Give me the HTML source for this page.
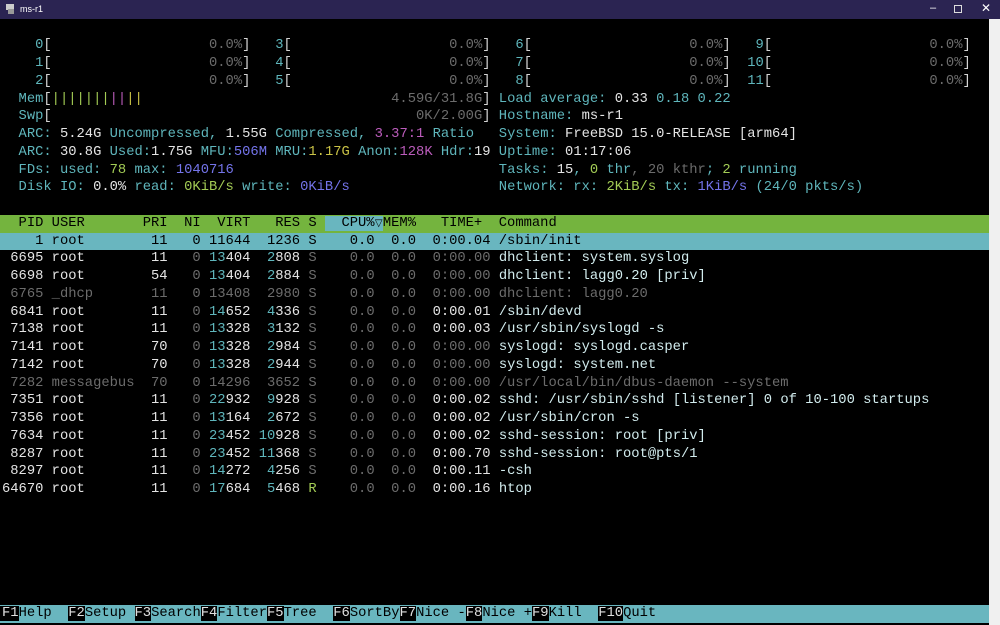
<!DOCTYPE html>
<html><head><meta charset="utf-8">
<style>
*{margin:0;padding:0;box-sizing:border-box}
html,body{width:1000px;height:625px;overflow:hidden;background:#000}
body{position:relative;font-family:"Liberation Mono","DejaVu Sans Mono",monospace;font-size:13.8px;color:#d4d4d4}
#title{position:absolute;left:0;top:0;width:1000px;height:19px;background:#2b2452;font-family:"Liberation Sans",sans-serif;color:#fff;font-size:9px}
#sb{position:absolute;left:989px;top:19px;width:11px;height:606px;background:#f0f0f0}
.t{position:absolute;left:calc(2px + var(--c)*8.28px);top:calc(19.5px + var(--r)*17.75px);white-space:pre;line-height:17.75px;height:17.75px}
.row{position:absolute;left:0;width:989px;top:calc(19.5px + var(--r)*17.75px);height:17.75px;line-height:17.75px;white-space:pre;padding-left:2px}
.c{color:#5fb6bc}.w{color:#e4e4e4}.g{color:#6c6c6c}.gr{color:#a3cc55}.b{color:#7474ea}.m{color:#bb5cbb}.y{color:#c9c246}.d{color:#d4d4d4}.cm{color:#d2ecee}
.hdr{background:#74b43e;color:#000}
.sel{background:#69b6bf;color:#000}
.tri{display:inline-block;width:8.28px;overflow:hidden;text-align:center;font-family:"DejaVu Sans",sans-serif;font-size:10px;vertical-align:top}
.k{color:#e0e0e0;background:#000}.l{background:#69b6bf;color:#000}
</style></head><body>
<div id="title">
<svg style="position:absolute;left:5px;top:3px" width="11" height="12" viewBox="0 0 11 12"><rect x="1" y="1" width="8" height="6" fill="#ccc"/><rect x="3" y="6" width="6" height="5" fill="#999"/></svg>
<span style="position:absolute;left:20px;top:4px">ms-r1</span>
<span style="position:absolute;left:930px;top:2px;font-size:11px">–</span>
<span style="position:absolute;left:954px;top:5px;width:8px;height:8px;border:1px solid #ddd"></span>
<span style="position:absolute;left:981px;top:1px;font-size:12px">✕</span>
</div>
<div id="sb"></div>

<!-- CPU meters -->
<span class="t c" style="--c:4;--r:1">0</span><span class="t d" style="--c:5;--r:1">[</span><span class="t g" style="--c:25;--r:1">0.0%</span><span class="t d" style="--c:29;--r:1">]</span>
<span class="t c" style="--c:33;--r:1">3</span><span class="t d" style="--c:34;--r:1">[</span><span class="t g" style="--c:54;--r:1">0.0%</span><span class="t d" style="--c:58;--r:1">]</span>
<span class="t c" style="--c:62;--r:1">6</span><span class="t d" style="--c:63;--r:1">[</span><span class="t g" style="--c:83;--r:1">0.0%</span><span class="t d" style="--c:87;--r:1">]</span>
<span class="t c" style="--c:91;--r:1">9</span><span class="t d" style="--c:92;--r:1">[</span><span class="t g" style="--c:112;--r:1">0.0%</span><span class="t d" style="--c:116;--r:1">]</span>

<span class="t c" style="--c:4;--r:2">1</span><span class="t d" style="--c:5;--r:2">[</span><span class="t g" style="--c:25;--r:2">0.0%</span><span class="t d" style="--c:29;--r:2">]</span>
<span class="t c" style="--c:33;--r:2">4</span><span class="t d" style="--c:34;--r:2">[</span><span class="t g" style="--c:54;--r:2">0.0%</span><span class="t d" style="--c:58;--r:2">]</span>
<span class="t c" style="--c:62;--r:2">7</span><span class="t d" style="--c:63;--r:2">[</span><span class="t g" style="--c:83;--r:2">0.0%</span><span class="t d" style="--c:87;--r:2">]</span>
<span class="t c" style="--c:90;--r:2">10</span><span class="t d" style="--c:92;--r:2">[</span><span class="t g" style="--c:112;--r:2">0.0%</span><span class="t d" style="--c:116;--r:2">]</span>

<span class="t c" style="--c:4;--r:3">2</span><span class="t d" style="--c:5;--r:3">[</span><span class="t g" style="--c:25;--r:3">0.0%</span><span class="t d" style="--c:29;--r:3">]</span>
<span class="t c" style="--c:33;--r:3">5</span><span class="t d" style="--c:34;--r:3">[</span><span class="t g" style="--c:54;--r:3">0.0%</span><span class="t d" style="--c:58;--r:3">]</span>
<span class="t c" style="--c:62;--r:3">8</span><span class="t d" style="--c:63;--r:3">[</span><span class="t g" style="--c:83;--r:3">0.0%</span><span class="t d" style="--c:87;--r:3">]</span>
<span class="t c" style="--c:90;--r:3">11</span><span class="t d" style="--c:92;--r:3">[</span><span class="t g" style="--c:112;--r:3">0.0%</span><span class="t d" style="--c:116;--r:3">]</span>

<!-- Left half -->
<span class="t" style="--c:2;--r:4"><span class="c">Mem</span><span class="d">[</span><span class="gr">|||||||</span><span class="m">||</span><span class="y">||</span></span>
<span class="t" style="--c:47;--r:4"><span class="g">4.59G/31.8G</span><span class="d">]</span></span>
<span class="t" style="--c:2;--r:5"><span class="c">Swp</span><span class="d">[</span></span>
<span class="t" style="--c:50;--r:5"><span class="g">0K/2.00G</span><span class="d">]</span></span>
<span class="t" style="--c:2;--r:6"><span class="c">ARC: </span><span class="w">5.24G</span><span class="c"> Uncompressed, </span><span class="w">1.55G</span><span class="c"> Compressed, </span><span class="m">3.37:1</span><span class="c"> Ratio</span></span>
<span class="t" style="--c:2;--r:7"><span class="c">ARC: </span><span class="w">30.8G</span><span class="c"> Used:</span><span class="w">1.75G</span><span class="c"> MFU:</span><span class="b">506M</span><span class="c"> MRU:</span><span class="y">1.17G</span><span class="c"> Anon:</span><span class="m">128K</span><span class="c"> Hdr:</span><span class="w">19</span></span>
<span class="t" style="--c:2;--r:8"><span class="c">FDs: used: </span><span class="gr">78</span><span class="c"> max: </span><span class="b">1040716</span></span>
<span class="t" style="--c:2;--r:9"><span class="c">Disk IO: </span><span class="w">0.0%</span><span class="c"> read: </span><span class="gr">0KiB/s</span><span class="c"> write: </span><span class="b">0KiB/s</span></span>

<!-- Right half -->
<span class="t" style="--c:60;--r:4"><span class="c">Load average: </span><span class="w">0.33 </span><span class="c">0.18 </span><span class="c">0.22</span></span>
<span class="t" style="--c:60;--r:5"><span class="c">Hostname: </span><span class="w">ms-r1</span></span>
<span class="t" style="--c:60;--r:6"><span class="c">System: </span><span class="w">FreeBSD 15.0-RELEASE [arm64]</span></span>
<span class="t" style="--c:60;--r:7"><span class="c">Uptime: </span><span class="w">01:17:06</span></span>
<span class="t" style="--c:60;--r:8"><span class="c">Tasks: </span><span class="w">15</span><span class="c">, </span><span class="gr">0</span><span class="c"> thr</span><span class="g">, 20 kthr</span><span class="c">; </span><span class="gr">2</span><span class="c"> running</span></span>
<span class="t" style="--c:60;--r:9"><span class="c">Network: rx: </span><span class="gr">2KiB/s</span><span class="c"> tx: </span><span class="b">1KiB/s</span><span class="c"> (24/0 pkts/s)</span></span>

<!-- Header -->
<div class="row hdr" style="--r:11">  PID USER       PRI  NI  VIRT   RES S <span class="sel">  CPU%<span class="tri">▽</span></span>MEM%   TIME+  Command</div>
<div class="row sel" style="--r:12">    1 root        11   0 11644  1236 S    0.0  0.0  0:00.04 /sbin/init</div>

<div class="row" style="--r:13"><span class="w"> 6695 root        11</span> <span class="g">  0</span> <span class="c">13</span><span class="w">404</span> <span class="c"> 2</span><span class="w">808</span> <span class="g">S    0.0  0.0  0:00.00</span> <span class="cm">dhclient: system.syslog</span></div>
<div class="row" style="--r:14"><span class="w"> 6698 root        54</span> <span class="g">  0</span> <span class="c">13</span><span class="w">404</span> <span class="c"> 2</span><span class="w">884</span> <span class="g">S    0.0  0.0  0:00.00</span> <span class="cm">dhclient: lagg0.20 [priv]</span></div>
<div class="row g" style="--r:15"> 6765 _dhcp       11   0 13408  2980 S    0.0  0.0  0:00.00 dhclient: lagg0.20</div>
<div class="row" style="--r:16"><span class="w"> 6841 root        11</span> <span class="g">  0</span> <span class="c">14</span><span class="w">652</span> <span class="c"> 4</span><span class="w">336</span> <span class="g">S    0.0  0.0</span> <span class="w"> 0:00.01</span> <span class="cm">/sbin/devd</span></div>
<div class="row" style="--r:17"><span class="w"> 7138 root        11</span> <span class="g">  0</span> <span class="c">13</span><span class="w">328</span> <span class="c"> 3</span><span class="w">132</span> <span class="g">S    0.0  0.0</span> <span class="w"> 0:00.03</span> <span class="cm">/usr/sbin/syslogd -s</span></div>
<div class="row" style="--r:18"><span class="w"> 7141 root        70</span> <span class="g">  0</span> <span class="c">13</span><span class="w">328</span> <span class="c"> 2</span><span class="w">984</span> <span class="g">S    0.0  0.0  0:00.00</span> <span class="cm">syslogd: syslogd.casper</span></div>
<div class="row" style="--r:19"><span class="w"> 7142 root        70</span> <span class="g">  0</span> <span class="c">13</span><span class="w">328</span> <span class="c"> 2</span><span class="w">944</span> <span class="g">S    0.0  0.0  0:00.00</span> <span class="cm">syslogd: system.net</span></div>
<div class="row g" style="--r:20"> 7282 messagebus  70   0 14296  3652 S    0.0  0.0  0:00.00 /usr/local/bin/dbus-daemon --system</div>
<div class="row" style="--r:21"><span class="w"> 7351 root        11</span> <span class="g">  0</span> <span class="c">22</span><span class="w">932</span> <span class="c"> 9</span><span class="w">928</span> <span class="g">S    0.0  0.0</span> <span class="w"> 0:00.02</span> <span class="cm">sshd: /usr/sbin/sshd [listener] 0 of 10-100 startups</span></div>
<div class="row" style="--r:22"><span class="w"> 7356 root        11</span> <span class="g">  0</span> <span class="c">13</span><span class="w">164</span> <span class="c"> 2</span><span class="w">672</span> <span class="g">S    0.0  0.0</span> <span class="w"> 0:00.02</span> <span class="cm">/usr/sbin/cron -s</span></div>
<div class="row" style="--r:23"><span class="w"> 7634 root        11</span> <span class="g">  0</span> <span class="c">23</span><span class="w">452</span> <span class="c">10</span><span class="w">928</span> <span class="g">S    0.0  0.0</span> <span class="w"> 0:00.02</span> <span class="cm">sshd-session: root [priv]</span></div>
<div class="row" style="--r:24"><span class="w"> 8287 root        11</span> <span class="g">  0</span> <span class="c">23</span><span class="w">452</span> <span class="c">11</span><span class="w">368</span> <span class="g">S    0.0  0.0</span> <span class="w"> 0:00.70</span> <span class="cm">sshd-session: root@pts/1</span></div>
<div class="row" style="--r:25"><span class="w"> 8297 root        11</span> <span class="g">  0</span> <span class="c">14</span><span class="w">272</span> <span class="c"> 4</span><span class="w">256</span> <span class="g">S    0.0  0.0</span> <span class="w"> 0:00.11</span> <span class="cm">-csh</span></div>
<div class="row" style="--r:26"><span class="w">64670 root        11</span> <span class="g">  0</span> <span class="c">17</span><span class="w">684</span> <span class="c"> 5</span><span class="w">468</span> <span class="gr">R</span><span class="g">    0.0  0.0</span> <span class="w"> 0:00.16</span> <span class="cm">htop</span></div>

<!-- Footer -->
<div class="row l" style="--r:33;padding-left:2px;background:#69b6bf"><span class="k" style="margin-left:-2px;padding-left:2px">F1</span>Help  <span class="k">F2</span>Setup <span class="k">F3</span>Search<span class="k">F4</span>Filter<span class="k">F5</span>Tree  <span class="k">F6</span>SortBy<span class="k">F7</span>Nice -<span class="k">F8</span>Nice +<span class="k">F9</span>Kill  <span class="k">F10</span>Quit</div>
</body></html>
